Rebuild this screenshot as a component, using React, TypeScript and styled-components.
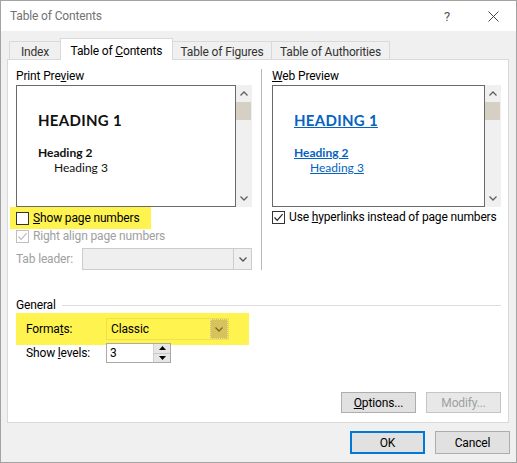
import React from "react";
import styled, { createGlobalStyle } from "styled-components";

const UI = 'Roboto, "Segoe UI", "Noto Sans", sans-serif';
const DOC = 'Lato, Calibri, "Noto Sans", sans-serif';

const GlobalStyle = createGlobalStyle`
  body {
    margin: 0;
    font-family: ${UI};
    font-size: 12px;
    letter-spacing: -0.15px;
    color: #000;
  }
`;

const Chevron = ({ up, color = "#606060" }: { up?: boolean; color?: string }) => (
  <svg width="8" height="5" viewBox="0 0 8 5">
    <polyline
      points={up ? "0.5,4.5 4,1 7.5,4.5" : "0.5,0.5 4,4 7.5,0.5"}
      fill="none"
      stroke={color}
      strokeWidth="1.3"
    />
  </svg>
);

const Check = ({ color }: { color: string }) => (
  <svg width="11" height="11" viewBox="0 0 11 11">
    <polyline points="1.5,5.5 4.2,8.3 9.6,2.2" fill="none" stroke={color} strokeWidth="1.2" />
  </svg>
);

const Tri = ({ up }: { up?: boolean }) => (
  <svg width="7" height="4" viewBox="0 0 7 4">
    <polygon points={up ? "0,4 3.5,0 7,4" : "0,0 3.5,4 7,0"} fill="#000" />
  </svg>
);

const App = () => {
  return (
    <>
      <GlobalStyle />
      <Window>
        <TitleBar>
          <TitleText>Table of Contents</TitleText>
          <TitleBtn>?</TitleBtn>
          <TitleBtn>
            <svg width="11" height="11" viewBox="0 0 11 11">
              <path d="M0.5 0.5 L10.5 10.5 M10.5 0.5 L0.5 10.5" stroke="#444" strokeWidth="1" />
            </svg>
          </TitleBtn>
        </TitleBar>

        <TabStrip>
          <Tab $w={52}>Index</Tab>
          <Tab $w={113} $active>
            <span>
              Table of <Key>C</Key>ontents
            </span>
          </Tab>
          <Tab $w={100}>Table of Figures</Tab>
          <Tab $w={119}>Table of Authorities</Tab>
        </TabStrip>

        <Panel>
          <TopGrid>
            <Column $w={236}>
              <SectionLabel>
                Print Pre<Key>v</Key>iew
              </SectionLabel>
              <PreviewFrame>
                <PreviewBox>
                  <H1>HEADING 1</H1>
                  <H2>Heading 2</H2>
                  <H3>Heading 3</H3>
                </PreviewBox>
                <ScrollBar>
                  <ScrollArrow>
                    <Chevron up />
                  </ScrollArrow>
                  <Thumb />
                  <ScrollFill />
                  <ScrollArrow>
                    <Chevron />
                  </ScrollArrow>
                </ScrollBar>
              </PreviewFrame>

              <CheckRow $h={22} $highlight>
                <Box />
                <span>
                  <Key>S</Key>how page numbers
                </span>
              </CheckRow>
              <CheckRow $h={14} $disabled>
                <Box $disabled>
                  <Check color="#bcbcbc" />
                </Box>
                <span>Right align page numbers</span>
              </CheckRow>
              <LeaderRow>
                <LeaderLabel>Tab leader:</LeaderLabel>
                <LeaderCombo>
                  <ComboValue />
                  <LeaderBtn>
                    <Chevron color="#555" />
                  </LeaderBtn>
                </LeaderCombo>
              </LeaderRow>
            </Column>

            <Separator />

            <Column $w={229}>
              <SectionLabel>
                <Key>W</Key>eb Preview
              </SectionLabel>
              <PreviewFrame>
                <PreviewBox>
                  <H1 $link>HEADING 1</H1>
                  <H2 $link>Heading 2</H2>
                  <H3 $link>Heading 3</H3>
                </PreviewBox>
                <ScrollBar>
                  <ScrollArrow>
                    <Chevron up />
                  </ScrollArrow>
                  <Thumb />
                  <ScrollFill />
                  <ScrollArrow>
                    <Chevron />
                  </ScrollArrow>
                </ScrollBar>
              </PreviewFrame>
              <CheckRow $h={20}>
                <Box>
                  <Check color="#222" />
                </Box>
                <span>
                  Use <Key>h</Key>yperlinks instead of page numbers
                </span>
              </CheckRow>
            </Column>
          </TopGrid>

          <GroupHeader>
            <span>General</span>
            <GroupLine />
          </GroupHeader>

          <FormatsRow>
            <FieldLabel>
              Forma<Key>t</Key>s:
            </FieldLabel>
            <FormatsCombo>
              <ComboValue>Classic</ComboValue>
              <FormatsBtn>
                <Chevron color="#7a6a20" />
              </FormatsBtn>
            </FormatsCombo>
          </FormatsRow>

          <LevelsRow>
            <FieldLabel>
              Show <Key>l</Key>evels:
            </FieldLabel>
            <Spin>
              <SpinValue>3</SpinValue>
              <SpinBtns>
                <SpinBtn>
                  <Tri up />
                </SpinBtn>
                <SpinBtn>
                  <Tri />
                </SpinBtn>
              </SpinBtns>
            </Spin>
          </LevelsRow>

          <Spacer />

          <ButtonRow>
            <Button>
              <span>
                <Key>O</Key>ptions...
              </span>
            </Button>
            <Button $disabled>Modify...</Button>
          </ButtonRow>
        </Panel>

        <Footer>
          <Button $primary $h={23}>
            OK
          </Button>
          <Button $h={23}>Cancel</Button>
        </Footer>
      </Window>
    </>
  );
};
export default App;

const Window = styled.div`
  width: 517px;
  height: 463px;
  box-sizing: border-box;
  border: 1px solid #a3a3a3;
  background-color: #f0f0f0;
  display: flex;
  flex-direction: column;
  overflow: hidden;
`;

const TitleBar = styled.div`
  height: 30px;
  background-color: #fff;
  display: flex;
  align-items: center;
  padding-left: 9px;
  color: #727272;
`;

const TitleText = styled.div`
  flex: 1;
`;

const TitleBtn = styled.div`
  width: 46px;
  height: 30px;
  display: flex;
  align-items: center;
  justify-content: center;
  color: #555;
  font-size: 13px;
`;

const TabStrip = styled.div`
  height: 28px;
  display: flex;
  align-items: flex-end;
  padding-left: 8px;
`;

const Tab = styled.div<{ $active?: boolean; $w: number }>`
  width: ${(p) => p.$w}px;
  height: ${(p) => (p.$active ? 22 : 18)}px;
  margin-bottom: ${(p) => (p.$active ? -1 : 0)}px;
  box-sizing: border-box;
  border: 1px solid #d9d9d9;
  border-bottom: none;
  background-color: ${(p) => (p.$active ? "#fff" : "#f0f0f0")};
  color: ${(p) => (p.$active ? "#000" : "#333")};
  display: flex;
  align-items: center;
  justify-content: center;
  padding-top: 2px;
  white-space: nowrap;
  position: relative;
  z-index: ${(p) => (p.$active ? 2 : 1)};
  & + & {
    margin-left: -1px;
  }
`;

const Key = styled.span`
  text-decoration: underline;
`;

const Panel = styled.div`
  height: 364px;
  box-sizing: border-box;
  margin: 0 7px 0 6px;
  background-color: #fff;
  border: 1px solid #d9d9d9;
  padding: 8px 7px 9px 8px;
  display: flex;
  flex-direction: column;
`;

const TopGrid = styled.div`
  display: flex;
`;

const Column = styled.div<{ $w: number }>`
  width: ${(p) => p.$w}px;
  display: flex;
  flex-direction: column;
`;

const Separator = styled.div`
  width: 1px;
  margin: 1px 10px 0 9px;
  background-color: #b9b9b9;
`;

const SectionLabel = styled.div`
  line-height: 16px;
  margin-bottom: 1px;
`;

const PreviewFrame = styled.div`
  height: 122px;
  display: flex;
`;

const PreviewBox = styled.div`
  flex: 1;
  border: 1px solid #6a6a6a;
  background-color: #fff;
  padding: 25px 0 0 21px;
  font-family: ${DOC};
  letter-spacing: 0;
`;

const H1 = styled.div<{ $link?: boolean }>`
  font-size: 15px;
  line-height: 18px;
  font-weight: 700;
  letter-spacing: 0.3px;
  color: ${(p) => (p.$link ? "#0563c1" : "#111")};
  text-decoration: ${(p) => (p.$link ? "underline" : "none")};
`;

const H2 = styled.div<{ $link?: boolean }>`
  margin-top: 16px;
  font-size: 12px;
  line-height: 15px;
  font-weight: 700;
  color: ${(p) => (p.$link ? "#0563c1" : "#111")};
  text-decoration: ${(p) => (p.$link ? "underline" : "none")};
`;

const H3 = styled.div<{ $link?: boolean }>`
  padding-left: 16px;
  font-size: 12px;
  line-height: 15px;
  color: ${(p) => (p.$link ? "#0563c1" : "#111")};
  text-decoration: ${(p) => (p.$link ? "underline" : "none")};
`;

const ScrollBar = styled.div`
  width: 16px;
  background-color: #f0f0f0;
  display: flex;
  flex-direction: column;
`;

const ScrollArrow = styled.div`
  height: 17px;
  display: flex;
  align-items: center;
  justify-content: center;
`;

const Thumb = styled.div`
  height: 18px;
  margin-right: 1px;
  background-color: #d6d0c4;
`;

const ScrollFill = styled.div`
  flex: 1;
`;

const CheckRow = styled.div<{ $h: number; $highlight?: boolean; $disabled?: boolean }>`
  height: ${(p) => p.$h}px;
  display: flex;
  align-items: center;
  gap: 4px;
  width: fit-content;
  white-space: nowrap;
  color: ${(p) => (p.$disabled ? "#a0a0a0" : "#000")};
  background-color: ${(p) => (p.$highlight ? "#fff350" : "transparent")};
  margin-left: ${(p) => (p.$highlight ? -6 : 0)}px;
  padding: ${(p) => (p.$highlight ? "0 11px 0 6px" : "0")};
`;

const Box = styled.div<{ $disabled?: boolean }>`
  width: 13px;
  height: 13px;
  flex-shrink: 0;
  box-sizing: border-box;
  border: 1px solid ${(p) => (p.$disabled ? "#c0c0c0" : "#333")};
  background-color: #fff;
  display: flex;
  align-items: center;
  justify-content: center;
`;

const LeaderRow = styled.div`
  margin-top: 5px;
  display: flex;
  align-items: center;
`;

const LeaderLabel = styled.div`
  width: 66px;
  color: #a0a0a0;
`;

const LeaderCombo = styled.div`
  width: 170px;
  height: 22px;
  box-sizing: border-box;
  border: 1px solid #cccccc;
  background-color: #efefef;
  display: flex;
`;

const ComboValue = styled.div`
  flex: 1;
  display: flex;
  align-items: center;
  padding-left: 4px;
`;

const LeaderBtn = styled.div`
  width: 17px;
  border-left: 1px solid #cccccc;
  display: flex;
  align-items: center;
  justify-content: center;
`;

const GroupHeader = styled.div`
  margin-top: 27px;
  height: 16px;
  display: flex;
  align-items: center;
`;

const GroupLine = styled.div`
  flex: 1;
  height: 1px;
  margin-left: 6px;
  background-color: #dcdcdc;
`;

const FormatsRow = styled.div`
  width: 233px;
  height: 32px;
  box-sizing: border-box;
  padding-left: 10px;
  background-color: #fff350;
  display: flex;
  align-items: center;
`;

const FieldLabel = styled.div`
  width: 80px;
`;

const FormatsCombo = styled.div`
  width: 123px;
  height: 22px;
  box-sizing: border-box;
  border: 1px solid #eee14a;
  display: flex;
`;

const FormatsBtn = styled.div`
  width: 18px;
  background-color: #d6c35c;
  border: 1px dotted #efe39a;
  box-sizing: border-box;
  display: flex;
  align-items: center;
  justify-content: center;
`;

const LevelsRow = styled.div`
  margin-top: -2px;
  padding-left: 10px;
  display: flex;
  align-items: center;
`;

const Spin = styled.div`
  width: 65px;
  height: 20px;
  box-sizing: border-box;
  border: 1px solid #a9a9a9;
  background-color: #fff;
  display: flex;
`;

const SpinValue = styled.div`
  flex: 1;
  padding-left: 3px;
  display: flex;
  align-items: center;
`;

const SpinBtns = styled.div`
  width: 16px;
  display: flex;
  flex-direction: column;
  border-left: 1px solid #d0d0d0;
`;

const SpinBtn = styled.div`
  flex: 1;
  background-color: #e6e6e6;
  display: flex;
  align-items: center;
  justify-content: center;
  & + & {
    border-top: 1px solid #c8c8c8;
  }
`;

const Spacer = styled.div`
  flex: 1;
`;

const ButtonRow = styled.div`
  display: flex;
  justify-content: flex-end;
  gap: 10px;
`;

const Button = styled.div<{ $primary?: boolean; $disabled?: boolean; $h?: number }>`
  width: 75px;
  height: ${(p) => p.$h ?? 21}px;
  box-sizing: border-box;
  border: ${(p) =>
    p.$primary ? "2px solid #0078d7" : `1px solid ${p.$disabled ? "#c4c4c4" : "#adadad"}`};
  background-color: ${(p) => (p.$disabled ? "#e8e8e8" : "#e1e1e1")};
  color: ${(p) => (p.$disabled ? "#a0a0a0" : "#000")};
  display: flex;
  align-items: center;
  justify-content: center;
`;

const Footer = styled.div`
  padding: 8px 6px 0 0;
  display: flex;
  justify-content: flex-end;
  gap: 10px;
`;
